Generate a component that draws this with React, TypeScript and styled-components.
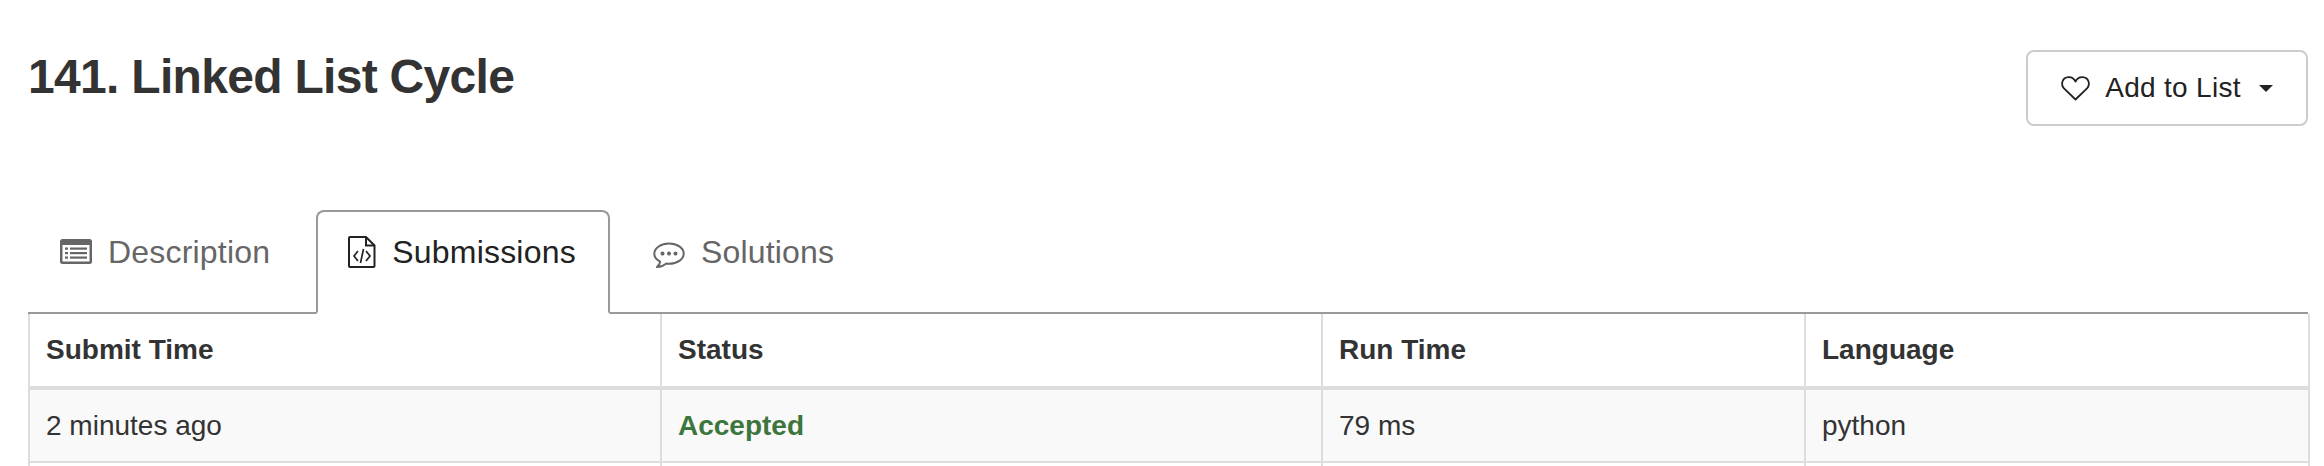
import React from "react";
import styled, { createGlobalStyle } from "styled-components";

const Global = createGlobalStyle`
  html, body { margin: 0; padding: 0; background: #fff; }
  body { font-family: "Liberation Sans", Arial, sans-serif; color: #333; overflow: hidden; }
`;

const Page = styled.div`
  width: 2324px;
  height: 466px;
  overflow: hidden;
  padding: 0 16px 0 28px;
  box-sizing: border-box;
`;

const Header = styled.header`
  display: flex;
  justify-content: space-between;
  align-items: flex-start;
  height: 210px;
`;

const Title = styled.h3`
  margin: 50px 0 0;
  font-size: 48px;
  line-height: 54px;
  font-weight: 700;
  letter-spacing: -0.7px;
  color: #333;
`;

const AddButton = styled.button`
  display: flex;
  align-items: center;
  justify-content: center;
  gap: 15px;
  margin-top: 50px;
  width: 282px;
  height: 76px;
  box-sizing: border-box;
  background: #fff;
  border: 2px solid #ccc;
  border-radius: 8px;
  font: 400 28px "Liberation Sans", Arial, sans-serif;
  letter-spacing: 0.3px;
  color: #222;
  padding: 0;
`;

const Caret = styled.span`
  width: 0;
  height: 0;
  margin-left: 3px;
  border-left: 7.5px solid transparent;
  border-right: 7.5px solid transparent;
  border-top: 7.5px solid #222;
`;

const TabBar = styled.nav`
  display: flex;
  height: 104px;
  box-sizing: border-box;
  border-bottom: 2px solid #999;
`;

const Tab = styled.a<{ $active?: boolean }>`
  display: flex;
  align-items: center;
  gap: 16px;
  height: 104px;
  box-sizing: border-box;
  padding: 0 32px 20px 30px;
  margin-right: ${(p) => (p.$active ? 11 : 12)}px;
  border: 2px solid ${(p) => (p.$active ? "#999" : "transparent")};
  border-bottom-color: ${(p) => (p.$active ? "#fff" : "transparent")};
  border-radius: 8px 8px 0 0;
  font-size: 32px;
  letter-spacing: 0.2px;
  color: ${(p) => (p.$active ? "#222" : "#666")};
`;

const Table = styled.table`
  width: 100%;
  table-layout: fixed;
  border-collapse: collapse;
  font-size: 28px;
  color: #333;
`;

const Col = styled.col<{ $w: number }>`
  width: ${(p) => p.$w}px;
`;

const Th = styled.th`
  height: 74px;
  padding: 0 16px;
  text-align: left;
  font-weight: 700;
  border: 2px solid #ddd;
  border-top: 0;
  border-bottom-width: 4px;
  box-sizing: border-box;
`;

const Row = styled.tr<{ $striped?: boolean }>`
  background: ${(p) => (p.$striped ? "#f9f9f9" : "#fff")};
`;

const Td = styled.td<{ $accepted?: boolean }>`
  height: 74px;
  padding: 0 16px;
  border: 2px solid #ddd;
  box-sizing: border-box;
  color: ${(p) => (p.$accepted ? "#3c763d" : "#333")};
  font-weight: ${(p) => (p.$accepted ? 700 : 400)};
`;

const ChatSvg = styled.svg`
  margin-top: 6px;
`;

const DescIcon = () => (
  <svg width="32" height="26" viewBox="0 0 32 26">
    <rect x="0" y="0" width="32" height="25" rx="2.5" fill="#666" />
    <rect x="2.5" y="6" width="27" height="16.5" fill="#fff" />
    <g fill="#666">
      <rect x="5" y="8.5" width="3" height="2.2" />
      <rect x="5" y="13" width="3" height="2.2" />
      <rect x="5" y="17.5" width="3" height="2.2" />
      <rect x="10" y="8.5" width="17" height="2.2" />
      <rect x="10" y="13" width="17" height="2.2" />
      <rect x="10" y="17.5" width="17" height="2.2" />
    </g>
  </svg>
);

const FileIcon = () => (
  <svg width="28" height="32" viewBox="0 0 28 32" fill="none" stroke="#222" strokeWidth="2">
    <path d="M2 1h16l8.5 8.5V30a1 1 0 0 1-1 1H2a1 1 0 0 1-1-1V2a1 1 0 0 1 1-1z" />
    <path d="M18 1v8.500h8.500" />
    <path d="M10 15l-4 5 4 5M18 15l4 5-4 5M15.500 13l-3 14" strokeWidth="1.700" />
  </svg>
);

const ChatIcon = () => (
  <ChatSvg width="32" height="27" viewBox="0 0 32 27" fill="none">
    <path
      d="M16 1.500C7.900 1.500 1.300 6 1.300 11.600c0 3.300 2.300 6.200 5.800 8 -.2 2-1.100 3.800-3.100 5.500 3.600-.2 6.900-1.500 9-3.500 1 .2 2 .2 3 .2 8.100 0 14.700-4.500 14.700-10.200S24.100 1.500 16 1.500z"
      stroke="#666"
      strokeWidth="2"
      strokeLinejoin="round"
    />
    <circle cx="9.500" cy="11.500" r="2" fill="#666" />
    <circle cx="16" cy="11.500" r="2" fill="#666" />
    <circle cx="22.500" cy="11.500" r="2" fill="#666" />
  </ChatSvg>
);

const HeartIcon = () => (
  <svg width="29" height="25" viewBox="0 0 29 25" fill="none">
    <path
      d="M14.500 23.500 3 12.300C-.500 8.700 1 1.500 7.500 1.200c3.200-.1 5.700 1.700 7 4.300 1.300-2.600 3.800-4.400 7-4.300C28 1.500 29.500 8.700 26 12.300z"
      stroke="#222"
      strokeWidth="1.800"
      strokeLinejoin="round"
    />
  </svg>
);

export default function App() {
  return (
    <Page>
      <Global />
      <Header>
        <Title>141. Linked List Cycle</Title>
        <AddButton>
          <HeartIcon />
          Add to List
          <Caret />
        </AddButton>
      </Header>
      <TabBar>
        <Tab>
          <DescIcon />
          Description
        </Tab>
        <Tab $active>
          <FileIcon />
          Submissions
        </Tab>
        <Tab>
          <ChatIcon />
          Solutions
        </Tab>
      </TabBar>
      <Table>
        <colgroup>
          <Col $w={632} />
          <Col $w={661} />
          <Col $w={483} />
          <Col $w={504} />
        </colgroup>
        <thead>
          <tr>
            <Th>Submit Time</Th>
            <Th>Status</Th>
            <Th>Run Time</Th>
            <Th>Language</Th>
          </tr>
        </thead>
        <tbody>
          <Row $striped>
            <Td>2 minutes ago</Td>
            <Td $accepted>Accepted</Td>
            <Td>79 ms</Td>
            <Td>python</Td>
          </Row>
          <Row>
            <Td />
            <Td />
            <Td />
            <Td />
          </Row>
        </tbody>
      </Table>
    </Page>
  );
}
